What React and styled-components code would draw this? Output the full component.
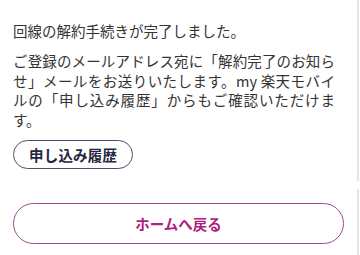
import React from "react"
import styled, { createGlobalStyle } from "styled-components"

const GlobalStyle = createGlobalStyle`
  html, body {
    margin: 0;
    padding: 0;
    background: #fff;
  }
  body {
    font-family: "Noto Sans CJK JP", "Noto Sans", sans-serif;
    color: #333;
  }
`

const Page = styled.div`
  width: 359px;
  display: flex;
  flex-direction: column;
  gap: 8px;
`

const Section = styled.section`
  border-right: 2px solid #e4e4e4;
  padding: ${props => props.pad};
  display: flex;
  flex-direction: column;
  align-items: flex-start;
`

const Lead = styled.p`
  margin: 0 0 10px;
  font-size: 14.5px;
  line-height: 21px;
`

const Body = styled.p`
  margin: 0 0 11px;
  width: 322px;
  font-size: 14.5px;
  line-height: 19.5px;
  text-align: justify;
`

const OutlineButton = styled.button`
  height: 29px;
  padding: 0 15px;
  border: 1px solid #4d4d6b;
  border-radius: 15px;
  background: #fff;
  color: #26263f;
  font-family: inherit;
  font-size: 14.5px;
  font-weight: 700;
  letter-spacing: 0.2px;
`

const HomeButton = styled.button`
  width: 331px;
  height: 41px;
  border: 1.5px solid #9a4d91;
  border-radius: 21px;
  background: #fff;
  color: #b0207f;
  font-family: inherit;
  font-size: 14.5px;
  font-weight: 700;
`

export default function App() {
  return (
    <>
      <GlobalStyle />
      <Page>
        <Section pad="20px 13px 12px">
          <Lead>回線の解約手続きが完了しました。</Lead>
          <Body>
            ご登録のメールアドレス宛に「解約完了のお知らせ」メールをお送りいたします。my 楽天モバイルの「申し込み履歴」からもご確認いただけます。
          </Body>
          <OutlineButton>申し込み履歴</OutlineButton>
        </Section>
        <Section pad="14px 13px 12px">
          <HomeButton>ホームへ戻る</HomeButton>
        </Section>
      </Page>
    </>
  )
}
